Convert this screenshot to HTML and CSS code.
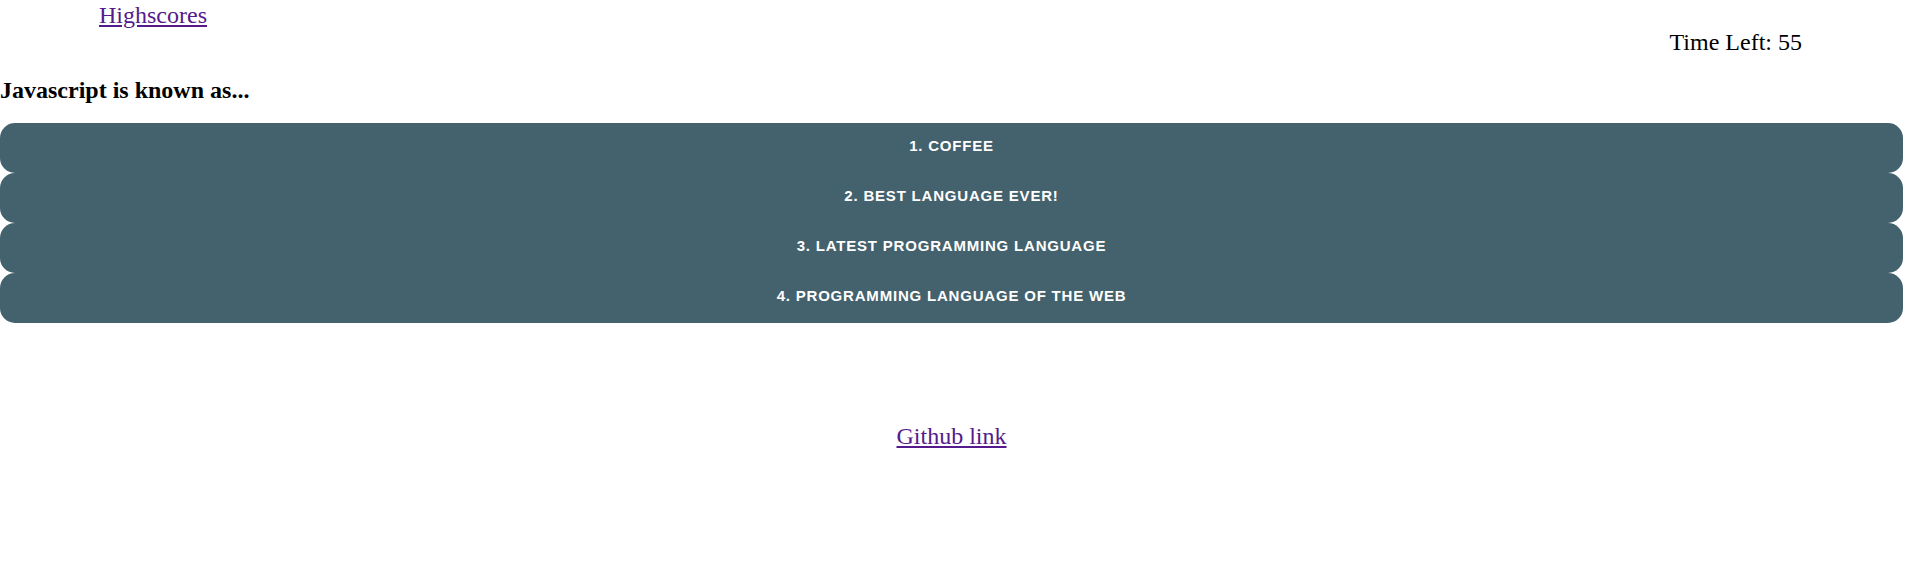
FILE: index.html
```html
<!DOCTYPE html>
<html>
<head>
<meta charset="utf-8">
<link rel="stylesheet" href="styles.css">
</head>
<body>
<header class="top">
  <a class="scores" href="#">Highscores</a>
  <div class="timer">Time Left: 55</div>
</header>
<main class="quiz">
  <h2 class="question">Javascript is known as...</h2>
  <div class="choices">
    <button class="choice">1. Coffee</button>
    <button class="choice">2. Best language ever!</button>
    <button class="choice">3. Latest programming language</button>
    <button class="choice">4. Programming language of the web</button>
  </div>
</main>
<footer class="foot">
  <a class="gh" href="#">Github link</a>
</footer>
</body>
</html>
```

FILE: styles.css
```css
body {
  margin: 0;
  font-family: "Liberation Serif", "Times New Roman", serif;
  font-size: 24px;
  color: #000;
  background: #fff;
}
a {
  color: #551a8b;
}
.top {
  padding: 0 109px 0 99px;
}
.scores {
  display: block;
  width: max-content;
  line-height: 26px;
  padding-top: 2px;
}
.timer {
  text-align: right;
  line-height: 26px;
  padding-top: 1px;
}
.question {
  margin: 22px 0 19px 0;
  font-size: 24px;
  font-weight: bold;
}
.choices {
  display: flex;
  flex-direction: column;
  padding-right: 8px;
}
.choice {
  height: 50px;
  border: none;
  border-radius: 15px;
  background: #44626d;
  color: #fff;
  font-family: "Liberation Sans", Arial, sans-serif;
  font-weight: bold;
  font-size: 15px;
  letter-spacing: 0.8px;
  text-transform: uppercase;
  padding: 0 0 6px 0;
}
.foot {
  text-align: center;
  margin-top: 100px;
  padding-right: 8px;
}
```
